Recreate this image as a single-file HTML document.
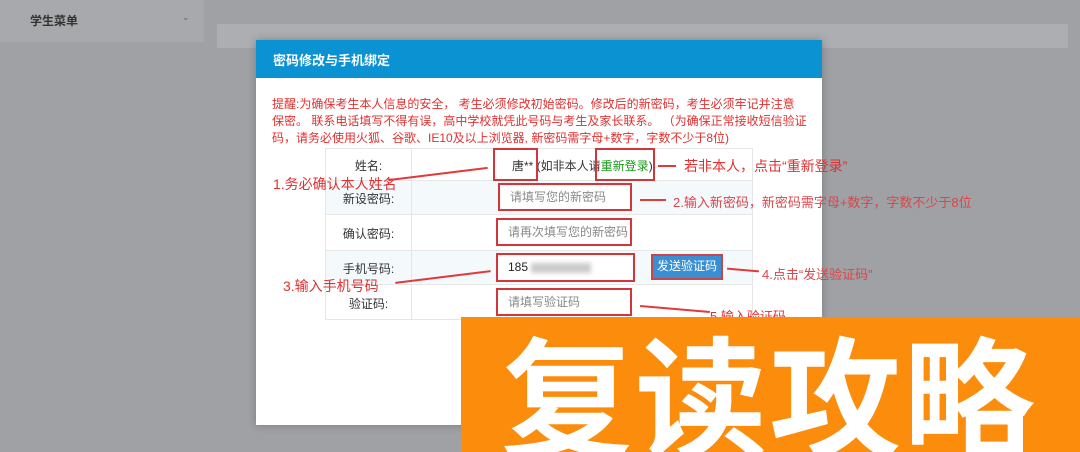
<!DOCTYPE html>
<html><head><meta charset="utf-8"><style>
*{margin:0;padding:0;box-sizing:border-box}
body{width:1080px;height:452px;overflow:hidden;background:#9fa1a5;position:relative;font-family:"Liberation Sans","Noto Sans CJK SC",sans-serif}
.a{position:absolute}
.red{color:#e0302f;font-size:13px;white-space:nowrap}
.box{position:absolute;border:2.5px solid #d2363b}
.lbl{position:absolute;left:326px;width:85px;text-align:center;font-size:12px;color:#333}
.inp{position:absolute;font-size:12px;color:#888;padding-left:8px;line-height:22px;background:#fff}
.ar{position:absolute;height:2px;background:#e03a3a}
</style></head><body>
<div class="a" style="left:0;top:0;width:204px;height:42px;background:#a7a9ac"></div>
<div class="a" style="left:30px;top:12px;font-size:12px;color:#333;font-weight:bold">学生菜单</div>
<div class="a" style="left:182px;top:12px;font-size:9px;color:#666">⌄</div>
<div class="a" style="left:217px;top:24px;width:851px;height:24px;background:#acaeb1"></div>

<div class="a" style="left:256px;top:40px;width:566px;height:385px;background:#fff;box-shadow:0 0 8px rgba(0,0,0,.25)"></div>
<div class="a" style="left:256px;top:40px;width:566px;height:38px;background:#0b92d2"></div>
<div class="a" style="left:273px;top:50px;color:#fff;font-size:13px;font-weight:bold">密码修改与手机绑定</div>
<div class="a" style="left:272px;top:96px;width:545px;color:#e0302f;font-size:12px;line-height:17px;white-space:nowrap">提醒:为确保考生本人信息的安全， 考生必须修改初始密码。修改后的新密码，考生必须牢记并注意<br>保密。 联系电话填写不得有误，高中学校就凭此号码与考生及家长联系。 （为确保正常接收短信验证<br>码，请务必使用火狐、谷歌、IE10及以上浏览器, 新密码需字母+数字，字数不少于8位)</div>

<div class="a" style="left:325px;top:148px;width:428px;height:172px;border:1px solid #e6e6e6;background:#fff"></div>
<div class="a" style="left:326px;top:180px;width:426px;height:35px;background:#f4f9fc;border-top:1px solid #e6e6e6;border-bottom:1px solid #e6e6e6"></div>
<div class="a" style="left:326px;top:250px;width:426px;height:35px;background:#f4f9fc;border-top:1px solid #e6e6e6;border-bottom:1px solid #e6e6e6"></div>
<div class="a" style="left:411px;top:148px;width:1px;height:172px;background:#e6e6e6"></div>

<div class="lbl" style="top:157px">姓名:</div>
<div class="lbl" style="top:190px">新设密码:</div>
<div class="lbl" style="top:225px">确认密码:</div>
<div class="lbl" style="top:260px">手机号码:</div>
<div class="lbl" style="top:295px">验证码:</div>

<div class="a" style="left:512px;top:157px;font-size:12px;color:#333">唐** (如非本人请<span style="color:#1a9a1a">重新登录</span>)</div>
<div class="box" style="left:493px;top:148px;width:45px;height:33px"></div>
<div class="box" style="left:595px;top:148px;width:60px;height:33px"></div>

<div class="inp" style="left:502px;top:186px;width:128px;height:24px">请填写您的新密码</div>
<div class="box" style="left:498px;top:183px;width:134px;height:28px"></div>
<div class="inp" style="left:500px;top:221px;width:130px;height:24px">请再次填写您的新密码</div>
<div class="box" style="left:496px;top:218px;width:136px;height:28px"></div>
<div class="inp" style="left:500px;top:256px;width:132px;height:24px;color:#222">185<span style="display:inline-block;width:60px;height:10px;background:#ccc;filter:blur(2px);margin-left:3px;vertical-align:middle"></span></div>
<div class="box" style="left:496px;top:253px;width:139px;height:29px"></div>
<div class="a" style="left:651px;top:254px;width:72px;height:26px;background:#3a8fd3;border:2.5px solid #c9454a;color:#fff;font-size:12px;line-height:21px;text-align:center">发送验证码</div>
<div class="inp" style="left:500px;top:291px;width:130px;height:24px">请填写验证码</div>
<div class="box" style="left:496px;top:288px;width:136px;height:28px"></div>

<div class="a red" style="left:273px;top:174px;font-size:14px">1.务必确认本人姓名</div>
<div class="ar" style="left:388px;top:173px;width:100px;transform:rotate(-7deg)"></div>
<div class="a red" style="left:684px;top:156px;font-size:14px">若非本人，点击“重新登录”</div>
<div class="ar" style="left:658px;top:165px;width:18px"></div>
<div class="a red" style="left:673px;top:192px;font-size:13px;color:#d9464a">2.输入新密码，新密码需字母+数字，字数不少于8位</div>
<div class="ar" style="left:640px;top:199px;width:26px"></div>
<div class="a red" style="left:283px;top:276px;font-size:14px">3.输入手机号码</div>
<div class="ar" style="left:395px;top:276px;width:96px;transform:rotate(-7deg)"></div>
<div class="a red" style="left:762px;top:264px;font-size:13px;color:#d9464a">4.点击“发送验证码”</div>
<div class="ar" style="left:727px;top:269px;width:32px;transform:rotate(5deg)"></div>
<div class="ar" style="left:640px;top:308px;width:70px;transform:rotate(5deg)"></div>
<div class="a red" style="left:710px;top:306px;font-size:13px">5.输入验证码</div>

<div class="a" style="left:461px;top:317px;width:619px;height:135px;background:#fb8c0c;overflow:hidden">
<div style="position:absolute;left:40px;top:-4px;font-family:'Noto Sans CJK SC',sans-serif;font-size:132px;line-height:1.2;color:#fff;letter-spacing:2px;white-space:nowrap;font-weight:bold">复读攻略</div>
</div>
</body></html>
